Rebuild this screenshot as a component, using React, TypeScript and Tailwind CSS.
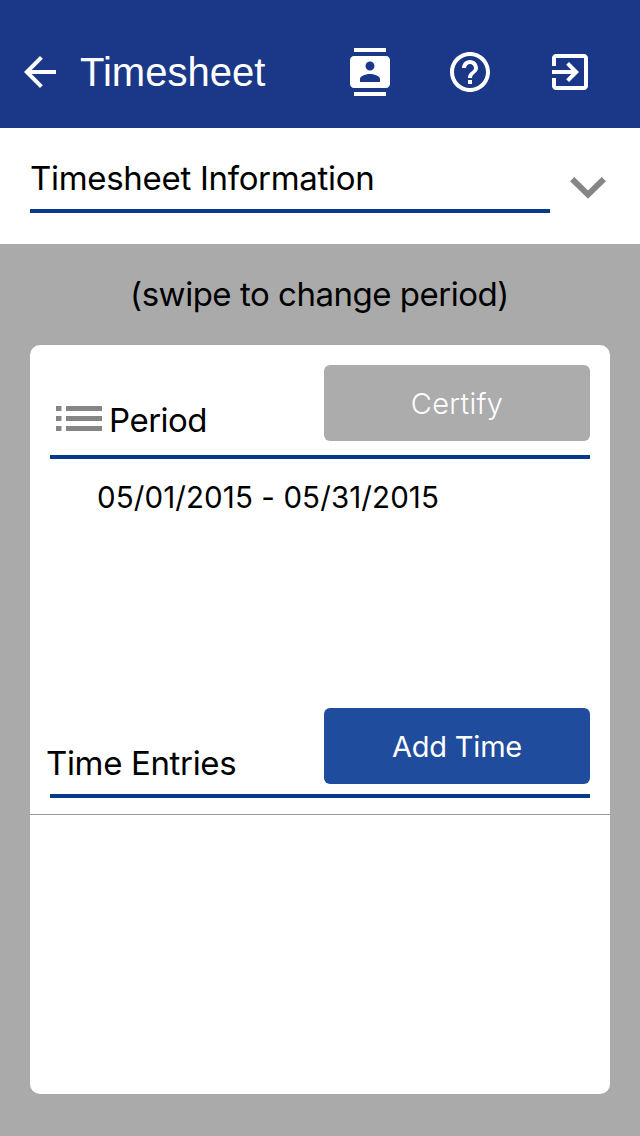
import type { ReactNode } from "react";

function Icon({ d, children }: { d?: string; children?: ReactNode }) {
  return (
    <svg viewBox="0 0 24 24" className="size-12 shrink-0" fill="currentColor">
      {d && <path d={d} />}
      {children}
    </svg>
  );
}

function Header() {
  return (
    <header className="flex h-32 items-center bg-[#1a3788] pt-4 pr-[46px] pl-4 text-white">
      <button aria-label="Back" className="flex">
        <Icon d="M20 11H7.83l5.59-5.59L12 4l-8 8 8 8 1.41-1.41L7.83 13H20v-2z" />
      </button>
      <h1 className="ml-4 flex-1 font-['Liberation_Sans',Arial,sans-serif] text-[40px] leading-[48px]">
        Timesheet
      </h1>
      <nav className="flex gap-[52px]">
        <button aria-label="Contacts" className="flex">
          <Icon d="M20 0H4v2h16V0zM4 24h16v-2H4v2zM20 4H4c-1.1 0-2 .9-2 2v12c0 1.1.9 2 2 2h16c1.1 0 2-.9 2-2V6c0-1.1-.9-2-2-2zm-8 2.75c1.24 0 2.25 1.01 2.25 2.25s-1.01 2.25-2.25 2.25S9.75 10.24 9.75 9 10.76 6.75 12 6.75zM17 17H7v-1.5c0-1.67 3.33-2.5 5-2.5s5 .83 5 2.5V17z" />
        </button>
        <button aria-label="Help" className="flex">
          <Icon d="M11 18h2v-2h-2v2zm1-16C6.48 2 2 6.48 2 12s4.48 10 10 10 10-4.48 10-10S17.52 2 12 2zm0 18c-4.41 0-8-3.59-8-8s3.59-8 8-8 8 3.59 8 8-3.59 8-8 8zm0-14c-2.21 0-4 1.79-4 4h2c0-1.1.9-2 2-2s2 .9 2 2c0 2-3 1.75-3 5h2c0-2.25 3-2.5 3-5 0-2.21-1.79-4-4-4z" />
        </button>
        <button aria-label="Exit" className="flex">
          <Icon d="M10.09 15.59L11.5 17l5-5-5-5-1.41 1.41L12.67 11H3v2h9.67l-2.58 2.59zM19 3H5c-1.11 0-2 .9-2 2v4h2V5h14v14H5v-4H3v4c0 1.1.89 2 2 2h14c1.1 0 2-.9 2-2V5c0-1.1-.9-2-2-2z" />
        </button>
      </nav>
    </header>
  );
}

function ListIcon() {
  return (
    <svg viewBox="0 0 46 26" className="-mt-[3px] h-[26px] w-[46px] shrink-0" fill="#868686">
      <path d="M0 0h5.5v5H0zM10 0h36v5H10zM0 10h5.5v5H0zM10 10h36v5H10zM0 20h5.5v5H0zM10 20h36v5H10z" />
    </svg>
  );
}

export default function App() {
  return (
    <div className="flex h-[1136px] w-[640px] flex-col bg-[#aaaaaa] font-['Inter',sans-serif] text-black">
      <Header />

      <section className="flex h-[116px] bg-white pl-[30px]">
        <div className="h-[85px] w-[520px] border-b-4 border-[#043a8b] pt-[30px]">
          <h2 className="text-[33px] leading-10 tracking-[-0.3px] whitespace-nowrap">Timesheet Information</h2>
        </div>
        <svg viewBox="0 0 36 22" className="mt-[49px] ml-5 h-[22px] w-9" fill="none" stroke="#868686" strokeWidth="6">
          <path d="M2.2 2.2 18 17.6 33.8 2.2" />
        </svg>
      </section>

      <p className="pt-[30px] pr-px text-center text-[33px] leading-10 tracking-[-0.48px]">(swipe to change period)</p>

      <main className="mx-[30px] mt-[31px] flex h-[749px] flex-col rounded-[10px] bg-white">
        <div className="mx-5 flex h-[114px] justify-between border-b-4 border-[#043a8b] pt-5">
          <div className="mt-[35px] ml-1.5 flex h-10 items-center gap-[7px]">
            <ListIcon />
            <h3 className="text-[33px] leading-10 tracking-[-0.5px]">Period</h3>
          </div>
          <button className="h-[76px] w-[266px] rounded-md bg-[#acacac] pt-0.5 text-[29px] font-[350] tracking-[0.3px] text-white">
            Certify
          </button>
        </div>
        <p className="h-[249px] pt-[18px] pl-[67px] text-[29.5px] leading-10 tracking-[0.1px]">05/01/2015 - 05/31/2015</p>
        <div className="mx-5 flex h-[90px] justify-between border-b-4 border-[#043a8b]">
          <h3 className="mt-[35px] -ml-1 text-[33px] leading-10 tracking-[-0.35px]">Time Entries</h3>
          <button className="h-[76px] w-[266px] rounded-md bg-[#1f4c9d] pt-0.5 text-[29px] font-normal tracking-[-0.2px] text-white">
            Add Time
          </button>
        </div>
        <div className="mt-4 border-t border-[#9a9a9a]" />
      </main>
    </div>
  );
}
